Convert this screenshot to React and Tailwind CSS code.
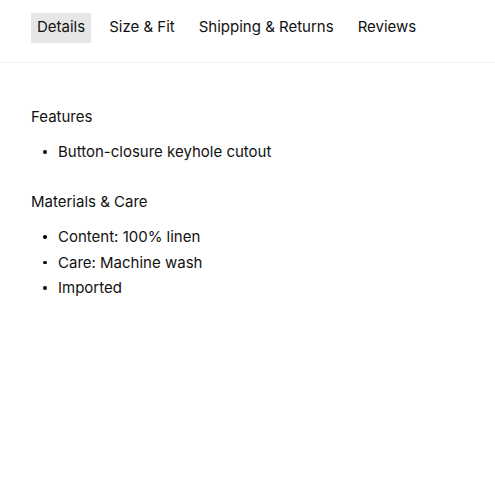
function Bullet({ children }) {
  return (
    <li className="flex items-center">
      <span className="w-[27px] flex justify-start pl-[12px]">
        <span className="block w-[3.5px] h-[3.5px] rounded-full bg-black" />
      </span>
      <span>{children}</span>
    </li>
  );
}

export default function App() {
  const tabs = ["Details", "Size & Fit", "Shipping & Returns", "Reviews"];

  return (
    <div className="min-h-screen bg-white text-[#111]" style={{ fontFamily: "Inter, 'Liberation Sans', sans-serif" }}>
      <nav className="border-b border-[#f0f0f0] pl-[31px] pt-[13px] pb-[19px]">
        <ul className="flex gap-[12px] text-[15px]">
          {tabs.map((t, i) => (
            <li
              key={t}
              className={
                "h-[30px] px-[6px] flex items-center pb-[2px] " + (i === 0 ? "bg-[#e6e6e6]" : "")
              }
            >
              {t}
            </li>
          ))}
        </ul>
      </nav>

      <main className="px-[31px] pt-[42px] text-[15px] leading-[24px]">
        <h3>Features</h3>
        <ul className="mt-[11px]">
          <Bullet>Button-closure keyhole cutout</Bullet>
        </ul>

        <h3 className="mt-[26px]">Materials &amp; Care</h3>
        <ul className="mt-[11px] space-y-[1.5px]">
          <Bullet>Content: 100% linen</Bullet>
          <Bullet>Care: Machine wash</Bullet>
          <Bullet>Imported</Bullet>
        </ul>
      </main>
    </div>
  );
}
